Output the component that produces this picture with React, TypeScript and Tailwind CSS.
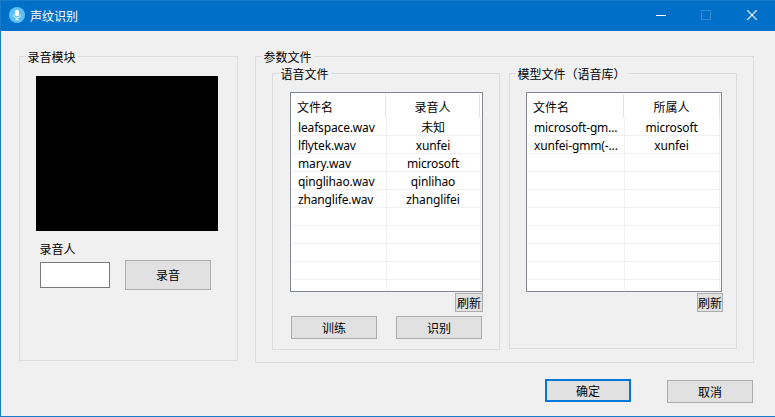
import type { ReactNode } from 'react';

function Group({ title, className = '', children }: { title: string; className?: string; children?: ReactNode }) {
  return (
    <section className={`flex shrink-0 flex-col border border-[#dcdcdc] ${className}`}>
      <h2 className="-mt-[7px] ml-1.5 h-3.5 w-fit shrink-0 whitespace-nowrap bg-[#f0f0f0] pl-[1.5px] pr-[2.5px] leading-[14px]">{title}</h2>
      {children}
    </section>
  );
}

function Button({ label, className = '' }: { label: string; className?: string }) {
  return (
    <button className={`flex shrink-0 items-center justify-center whitespace-nowrap bg-[#e1e1e1] leading-[14px] ${className}`}>
      {label}
    </button>
  );
}

type FileTableProps = {
  owner: string;
  rows: string[][];
  width: string;
  headCols: string;
  bodyCols: string;
};

function FileTable({ owner, rows, width, headCols, bodyCols }: FileTableProps) {
  const lines = Array.from({ length: 10 }, (_, i) => rows[i] ?? ['', '']);
  return (
    <div className={`h-[200px] shrink-0 border border-[#828790] bg-white p-px ${width}`}>
      <div className="h-[196px] overflow-hidden">
        <div className={`grid h-6 leading-[25px] ${headCols}`}>
          <span className="h-6 border-r border-[#e5e5e5] pl-[5px]">{'文件名'}</span>
          <span className="h-6 border-r border-[#e5e5e5] text-center">{owner}</span>
        </div>
        {lines.map(([file, person], i) => (
          <div key={i} className={`grid h-[18px] font-['Noto_Sans','Noto_Sans_CJK_SC',sans-serif] leading-[20px] tracking-[-0.15px] ${bodyCols}`}>
            <span className="h-[18px] whitespace-nowrap border-b border-r border-[#f0f0f0] pl-1.5">{file}</span>
            <span className="h-[18px] whitespace-nowrap border-b border-r border-[#f0f0f0] pr-px text-center">{person}</span>
          </div>
        ))}
      </div>
    </div>
  );
}

const voiceFiles = [
  ['leafspace.wav', '未知'],
  ['lflytek.wav', 'xunfei'],
  ['mary.wav', 'microsoft'],
  ['qinglihao.wav', 'qinlihao'],
  ['zhanglife.wav', 'zhanglifei'],
];

const modelFiles = [
  ['microsoft-gm...', 'microsoft'],
  ['xunfei-gmm(-...', 'xunfei'],
];

function TitleBar() {
  return (
    <header className="flex h-[30px] shrink-0 items-center bg-[#006fc8] pl-2 text-white">
      <svg width="16" height="16" viewBox="0 0 16 16" className="mt-[-2px]">
        <circle cx="8" cy="8" r="8" fill="#5bc0f5" />
        <rect x="6" y="2.8" width="4" height="6.4" rx="2" fill="#fff" />
        <path d="M4.5 7.5a3.5 3.5 0 0 0 7 0M8 11v2M6 12.7h4" fill="none" stroke="#fff" strokeWidth="0.8" />
      </svg>
      <h1 className="ml-[5px] flex-1 leading-[30px]">{'声纹识别'}</h1>
      <div className="mb-0.5 mr-[18px] flex items-center gap-[35px]">
        <svg width="10" height="10" viewBox="0 0 10 10">
          <path d="M0 5.5h10" stroke="#fff" />
        </svg>
        <svg width="10" height="10" viewBox="0 0 10 10">
          <rect x="0.5" y="0.5" width="9" height="9" fill="none" stroke="#338cd3" />
        </svg>
        <svg width="11" height="10" viewBox="0 0 11 10">
          <path d="M1.2 0.2l9.6 9.6M10.8 0.2l-9.6 9.6" stroke="#fff" strokeWidth="1.2" />
        </svg>
      </div>
    </header>
  );
}

export default function App() {
  return (
    <div className="flex h-[417px] w-[775px] flex-col overflow-hidden border-y border-l border-[#1979ca] bg-[#f0f0f0] font-['Noto_Sans_CJK_SC',sans-serif] text-xs text-black">
      <TitleBar />
      <main className="flex items-start gap-[17px] pl-[18px] pt-[25px]">
        <Group title="录音模块" className="h-[305px] w-[219px]">
          <div className="ml-4 mt-3 h-[155px] w-[182px] bg-black" />
          <label className="ml-[19.5px] mt-[11px] h-[14px] leading-[14px]">{'录音人'}</label>
          <div className="ml-5 mt-1 flex items-center gap-[15px]">
            <input className="h-[26px] w-[70px] border border-[#7a7a7a] bg-white" />
            <Button label="录音" className="h-[30px] w-[86px] border border-[#adadad]" />
          </div>
        </Group>

        <Group title="参数文件" className="h-[307px] w-[499px]">
          <div className="ml-4 mt-[9px] flex items-start gap-[9px]">
            <Group title="语音文件" className="h-[277px] w-[228px]">
              <div className="ml-[17px] mt-[11px] flex w-[193px] flex-col">
                <FileTable
                  owner="录音人"
                  rows={voiceFiles}
                  width="w-[193px]"
                  headCols="grid-cols-[94px_94px]"
                  bodyCols="grid-cols-[95px_94px]"
                />
                <Button label="刷新" className="mt-px h-[19px] w-7 self-end border border-[#adadad]" />
                <div className="mt-1 flex justify-between px-px">
                  <Button label="训练" className="h-[23px] w-[86px] border border-[#adadad]" />
                  <Button label="识别" className="h-[23px] w-[86px] border border-[#adadad]" />
                </div>
              </div>
            </Group>
            <Group title="模型文件（语音库）" className="h-[276px] w-[228px]">
              <div className="ml-4 mt-[11px] flex w-[197px] flex-col">
                <FileTable
                  owner="所属人"
                  rows={modelFiles}
                  width="w-[196px]"
                  headCols="grid-cols-[96px_96px]"
                  bodyCols="grid-cols-[97px_95px]"
                />
                <Button label="刷新" className="mt-px h-[19px] w-[26px] self-end border border-[#adadad]" />
              </div>
            </Group>
          </div>
        </Group>
      </main>
      <footer className="mt-4 flex items-start justify-end gap-9 pr-[22px]">
        <Button label="确定" className="h-[23px] w-[86px] border-2 border-[#0078d7]" />
        <Button label="取消" className="mt-px h-[23px] w-[86px] border border-[#adadad]" />
      </footer>
    </div>
  );
}
